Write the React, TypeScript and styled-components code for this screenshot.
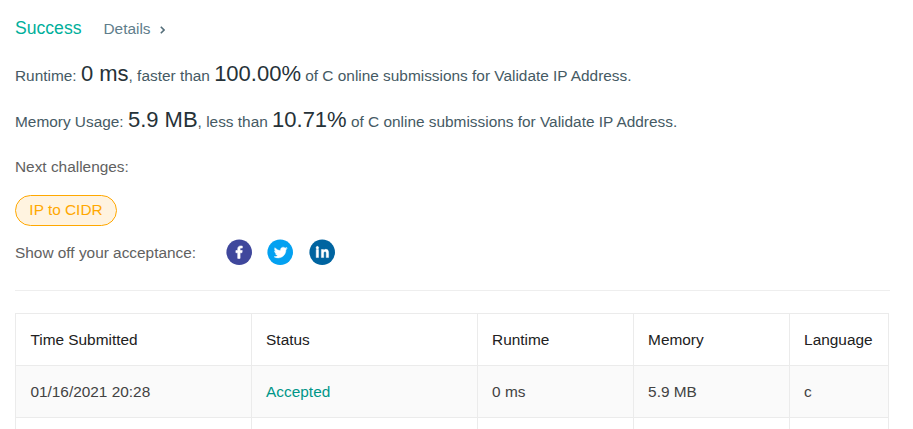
import React from 'react';
import styled, { createGlobalStyle } from 'styled-components';

const Global = createGlobalStyle`
  body { margin: 0; background: #fff; overflow: hidden; font-family: "Liberation Sans", Arial, sans-serif; }
  * { box-sizing: border-box; }
`;

const Page = styled.main`
  width: 913px; height: 429px; overflow: hidden;
  padding: 16px 23px 0 15px;
  font-size: 15.4px; color: #616161;
`;
const Header = styled.div`display: flex; align-items: center; height: 24px;`;
const Success = styled.span`font-size: 17.6px; line-height: 24px; color: #00af9b;`;
const Details = styled.span`
  display: flex; align-items: center; margin-left: 22px; color: #607d8b; line-height: 26px; margin-top: 2px;
  svg { margin-left: 9.5px; margin-top: 2px; }
`;
const Line = styled.p<{ $top: number }>`
  margin: ${p => p.$top}px 0 0; height: 26px; line-height: 26px; color: #455a64; white-space: nowrap;
`;
const Figure = styled.span`font-size: 22px; color: #263238;`;
const Label = styled.div`margin-top: 23px; line-height: 22px;`;
const Tag = styled.span`
  display: flex; align-items: center; justify-content: center; width: 102px; height: 31px; margin-top: 17px;
  border: 1px solid #ffa800; border-radius: 16px; background: #fff3e0; color: #ffa800; line-height: 27px; padding-bottom: 2px;
`;
const Share = styled.div`display: flex; align-items: center; height: 28px; margin-top: 13px; line-height: 28px;`;
const Icons = styled.div`
  display: flex; gap: 15.4px; margin: -1px 0 0 29.6px;
  svg { display: block; width: 26.4px; height: 26.4px; }
`;
const Rule = styled.hr`width: 875px; height: 1px; border: 0; margin: 23px 0 22px; background: #eee;`;
const Table = styled.table`
  width: 874px; border-collapse: collapse; table-layout: fixed; border: 1px solid #ebebeb;
`;
const Row = styled.tr<{ $shade?: boolean }>`background: ${p => (p.$shade ? '#fafafa' : '#fff')}; height: 52px;`;
const Cell = styled.td<{ $color?: string }>`
  border: 1px solid #ebebeb; padding: 0 14px 0 14.1px; text-align: left; font-weight: 400; color: ${p => p.$color || '#424242'};
  &:first-child { padding-left: 14.4px; }
`;
const Column = styled.col<{ $width?: number }>`width: ${p => (p.$width ? `${p.$width}px` : 'auto')};`;

export default function App() {
  return (
    <Page>
      <Global />
      <Header>
        <Success>Success</Success>
        <Details>Details<svg width="5" height="8" viewBox="0 0 5 8"><path d="M.8.8 4 4 .8 7.2" fill="none" stroke="#546e7a" strokeWidth="1.6" /></svg></Details>
      </Header>
      <Line $top={21}>Runtime: <Figure>0 ms</Figure>, faster than <Figure>100.00%</Figure> of C online submissions for Validate IP Address.</Line>
      <Line $top={20}>Memory Usage: <Figure>5.9 MB</Figure>, less than <Figure>10.71%</Figure> of C online submissions for Validate IP Address.</Line>
      <Label>Next challenges:</Label>
      <Tag>IP to CIDR</Tag>
      <Share>
        Show off your acceptance:
        <Icons>
          <svg viewBox="0 0 64 64"><circle cx="32" cy="32" r="31" fill="#3f479c" /><path fill="#fff" stroke="#fff" strokeWidth="1.5" d="M34.1 47V33.3h4.6l.7-5.3h-5.3v-3.4c0-1.5.4-2.6 2.6-2.6h2.8v-4.8c-.5-.1-2.2-.2-4.1-.2-4.1 0-6.9 2.5-6.9 7V28H24v5.3h4.5V47h5.6z" /></svg>
          <svg viewBox="0 0 64 64"><circle cx="32" cy="32" r="31" fill="#03a1f1" /><path fill="#fff" stroke="#fff" strokeWidth="1" transform="translate(1 .8)" d="M48 22.1c-1.2.5-2.4.9-3.8 1 1.4-.8 2.4-2.1 2.9-3.6-1.3.8-2.7 1.3-4.2 1.6C41.7 19.8 40 19 38.2 19c-3.6 0-6.6 2.9-6.6 6.6 0 .5.1 1 .2 1.5-5.5-.3-10.3-2.9-13.5-6.9-.6 1-.9 2.1-.9 3.3 0 2.3 1.2 4.3 2.9 5.5-1.1 0-2.1-.3-3-.8v.1c0 3.2 2.3 5.8 5.3 6.4-.6.1-1.1.2-1.7.2-.4 0-.8 0-1.2-.1.8 2.6 3.3 4.5 6.1 4.6-2.2 1.8-5.1 2.8-8.2 2.8-.5 0-1.1 0-1.6-.1 2.9 1.9 6.4 2.9 10.1 2.9 12.1 0 18.7-10 18.7-18.7v-.8c1.2-1 2.3-2.1 3.2-3.4z" /></svg>
          <svg viewBox="0 0 64 64"><circle cx="32" cy="32" r="31" fill="#0064a0" /><path fill="#fff" stroke="#fff" strokeWidth="1" transform="translate(-3.5 -4.3) scale(1.03 1.12)" d="M20.4 44h5.4V26.6h-5.4V44zm2.7-18c1.7 0 3.1-1.4 3.1-3.1 0-1.7-1.4-3.1-3.1-3.1-1.7 0-3.1 1.4-3.1 3.1 0 1.7 1.4 3.1 3.1 3.1zm26.4 8.5c0-4.7-1-8.3-6.5-8.3-2.6 0-4.4 1.4-5.1 2.8h-.1v-2.4h-5.2V44h5.4v-8.6c0-2.3.4-4.5 3.2-4.5 2.8 0 2.8 2.6 2.8 4.6V44H49.5v-9.5z" /></svg>
        </Icons>
      </Share>
      <Rule />
      <Table>
        <colgroup><Column $width={236} /><Column $width={226} /><Column $width={156} /><Column $width={156} /><Column /></colgroup>
        <tbody>
          <Row>{['Time Submitted', 'Status', 'Runtime', 'Memory', 'Language'].map(t => <Cell as="th" key={t} $color="#212121">{t}</Cell>)}</Row>
          <Row $shade><Cell>01/16/2021 20:28</Cell><Cell $color="#009688">Accepted</Cell><Cell>0 ms</Cell><Cell>5.9 MB</Cell><Cell>c</Cell></Row>
          <Row><Cell /><Cell /><Cell /><Cell /><Cell /></Row>
        </tbody>
      </Table>
    </Page>
  );
}
